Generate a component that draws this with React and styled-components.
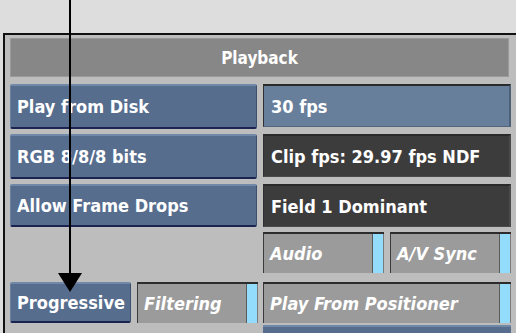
import React from 'react';
import styled, { createGlobalStyle } from 'styled-components';

const Global = createGlobalStyle`
  html, body {
    margin: 0;
    padding: 0;
    background: #dddddd;
    width: 516px;
    height: 333px;
    overflow: hidden;
  }
  body {
    font-family: "DejaVu Sans Condensed", "DejaVu Sans", sans-serif;
  }
`;

const Page = styled.div`
  position: relative;
  width: 516px;
  height: 333px;
  padding-top: 33px;
  box-sizing: border-box;
  overflow: hidden;
`;

const Panel = styled.div`
  margin-left: 3px;
  background: #bdbdbd;
  border-top: 2px solid #111;
  border-left: 2px solid #111;
  padding: 3px 5px 0 5px;
  box-sizing: border-box;
  display: flex;
  flex-direction: column;
  gap: 7px;
  & > * {
    flex-shrink: 0;
  }
`;

const Header = styled.div`
  height: 39px;
  width: 499px;
  background: #878787;
  border: 1px solid #9a9a9a;
  box-sizing: border-box;
  color: #fff;
  font-weight: bold;
  font-size: 17px;
  display: flex;
  align-items: center;
  justify-content: center;
`;

const Grid = styled.div`
  display: grid;
  grid-template-columns: 247px 248px;
  grid-template-rows: 45px 45px 43px 41px 45px 20px;
  column-gap: 6px;
  row-gap: 5px;
`;

const Button = styled.div`
  background: #566d8e;
  border-top: 2px solid #7089a8;
  border-bottom: 2px solid #1c2350;
  border-left: 1px solid #6a80a0;
  border-right: 1px solid #3c4f6e;
  border-radius: 2px;
  box-sizing: border-box;
  color: #fff;
  font-weight: bold;
  font-size: 18px;
  display: flex;
  align-items: center;
  padding-left: 6px;
  white-space: nowrap;
`;

const Field = styled.div`
  background: ${(p) => (p.$tone === 'blue' ? '#687f9b' : '#3c3c3c')};
  border-top: 2px solid #2a2a2a;
  border-left: 1px solid #2f2f2f;
  border-right: 2px solid ${(p) => (p.$tone === 'blue' ? '#4d6079' : '#4a4a4a')};
  border-bottom: 1px solid ${(p) => (p.$tone === 'blue' ? '#53657e' : '#4a4a4a')};
  box-sizing: border-box;
  color: #fff;
  font-weight: bold;
  font-size: 18px;
  display: flex;
  align-items: center;
  padding-left: 7px;
  white-space: nowrap;
  height: 43px;
`;

const Pair = styled.div`
  display: grid;
  grid-template-columns: ${(p) => p.$cols};
  column-gap: 6px;
  align-self: ${(p) => p.$align || 'stretch'};
  height: ${(p) => p.$h || 41}px;
`;

const Toggle = styled.div`
  background: #9b9b9b;
  border-top: 2px solid #2c2c2c;
  border-left: 1px solid #3a3a3a;
  box-sizing: border-box;
  display: flex;
  align-items: stretch;
  color: #fff;
  font-weight: bold;
  font-style: italic;
  font-size: 18px;
  height: 41px;
  align-self: end;
`;

const ToggleLabel = styled.span`
  flex: 1;
  display: flex;
  align-items: center;
  padding-left: 6px;
  white-space: nowrap;
  overflow: hidden;
`;

const Lamp = styled.span`
  width: 10px;
  background: #93dcfb;
  border-left: 1px solid #5a5a5a;
  border-right: 1px solid #7a7a7a;
`;

const Empty = styled.div``;

const NextRow = styled.div`
  background: #566d8e;
  border-top: 2px solid #7089a8;
  height: 20px;
  margin-top: -3px;
`;

const Arrow = styled.svg`
  position: absolute;
  left: 0;
  top: 0;
  pointer-events: none;
`;

const ToggleBox = ({ label }) => (
  <Toggle>
    <ToggleLabel>{label}</ToggleLabel>
    <Lamp />
  </Toggle>
);

export default function App() {
  return (
    <>
      <Global />
      <Page>
        <Panel>
          <Header>Playback</Header>
          <Grid>
            <Button>Play from Disk</Button>
            <Field $tone="blue">30 fps</Field>
            <Button>RGB 8/8/8 bits</Button>
            <Field>Clip fps: 29.97 fps NDF</Field>
            <Button>Allow Frame Drops</Button>
            <Field>Field 1 Dominant</Field>
            <Empty />
            <Pair $cols="121px 121px">
              <ToggleBox label="Audio" />
              <ToggleBox label="A/V Sync" />
            </Pair>
            <Pair $cols="121px 121px" $align="end">
              <Button>Progressive</Button>
              <ToggleBox label="Filtering" />
            </Pair>
            <Pair $cols="248px" $align="end">
              <ToggleBox label="Play From Positioner" />
            </Pair>
            <Empty />
            <NextRow />
          </Grid>
        </Panel>
        <Arrow width="516" height="333" viewBox="0 0 516 333">
          <line x1="70" y1="0" x2="70" y2="276" stroke="#000" strokeWidth="2" />
          <polygon points="58,273 82,273 70,292" fill="#000" />
        </Arrow>
      </Page>
    </>
  );
}
